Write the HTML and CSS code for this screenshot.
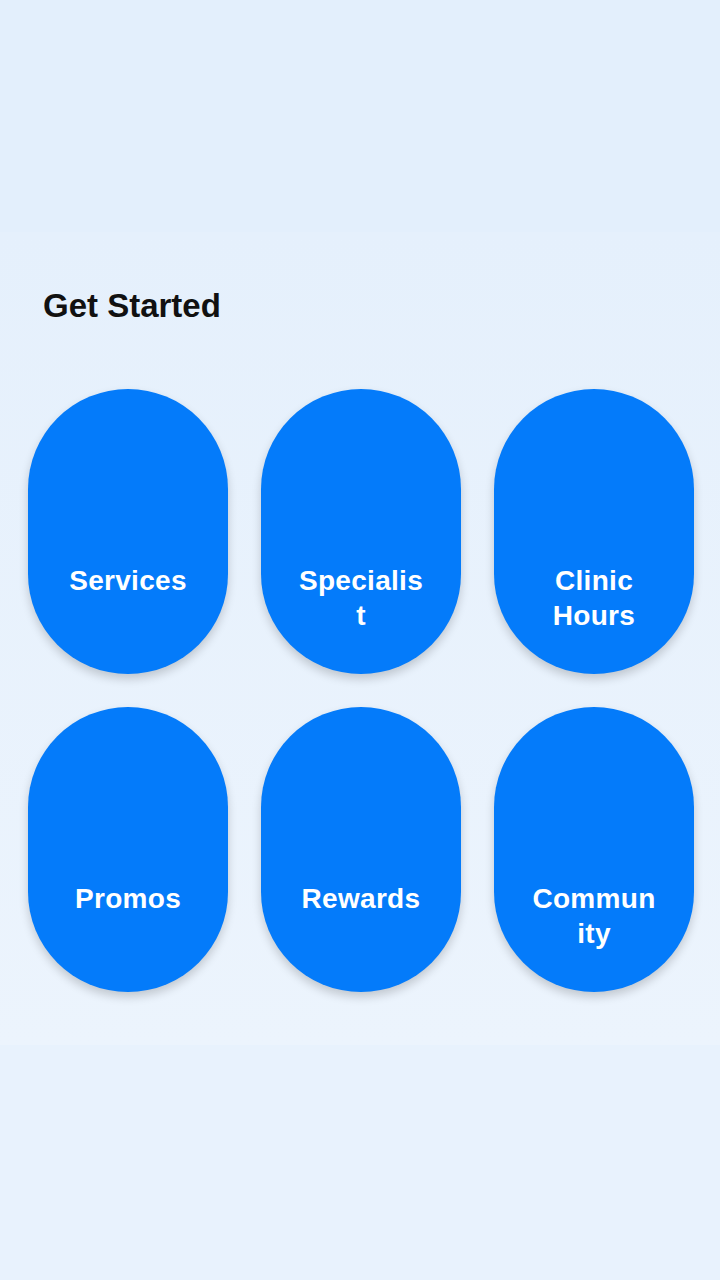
FILE: index.html
```html
<!DOCTYPE html>
<html lang="en">
<head>
    <meta charset="UTF-8">
    <meta name="viewport" content="width=device-width, initial-scale=1.0">
    <title>Clinic Home</title>
    <link rel="stylesheet" href="styles.css">
</head>
<body>
    <div class="top-banner"></div>

    <div class="get-started">
        <h2>Get Started</h2>
        <div class="menu-grid">
            <div class="menu-item"><span>Services</span></div>
            <div class="menu-item"><span>Specialist</span></div>
            <div class="menu-item"><span>Clinic Hours</span></div>
            <div class="menu-item"><span>Promos</span></div>
            <div class="menu-item"><span>Rewards</span></div>
            <div class="menu-item"><span>Community</span></div>
        </div>
    </div>

    <div class="bottom-area"></div>
</body>
</html>
```

FILE: styles.css
```css
body {
    font-family: Arial, "Liberation Sans", sans-serif;
    background-color: #e8f2fd;
    margin: 0;
    padding: 0;
}

.top-banner {
    height: 232px;
    background-color: #e3effc;
}

.get-started {
    background: linear-gradient(to bottom, #e5f0fc, #ecf4fd);
    padding: 55px 26px 53px 28px;
}

.get-started h2 {
    font-size: 33px;
    font-weight: bold;
    color: #111;
    margin: 0 0 64px 15px;
}

.menu-grid {
    display: grid;
    grid-template-columns: repeat(3, 200px);
    gap: 33px;
}

.menu-item {
    height: 285px;
    background-color: #047bfa;
    border-radius: 100px;
    box-shadow: 0 5px 10px rgba(0, 0, 0, 0.18);
    display: flex;
    flex-direction: column;
    align-items: center;
    padding: 174px 36px 0;
    box-sizing: border-box;
    cursor: pointer;
}

.menu-item span {
    color: #fff;
    font-size: 28px;
    font-weight: bold;
    letter-spacing: 0.3px;
    line-height: 35px;
    text-align: center;
    overflow-wrap: anywhere;
}

.bottom-area {
    height: 235px;
}
```
